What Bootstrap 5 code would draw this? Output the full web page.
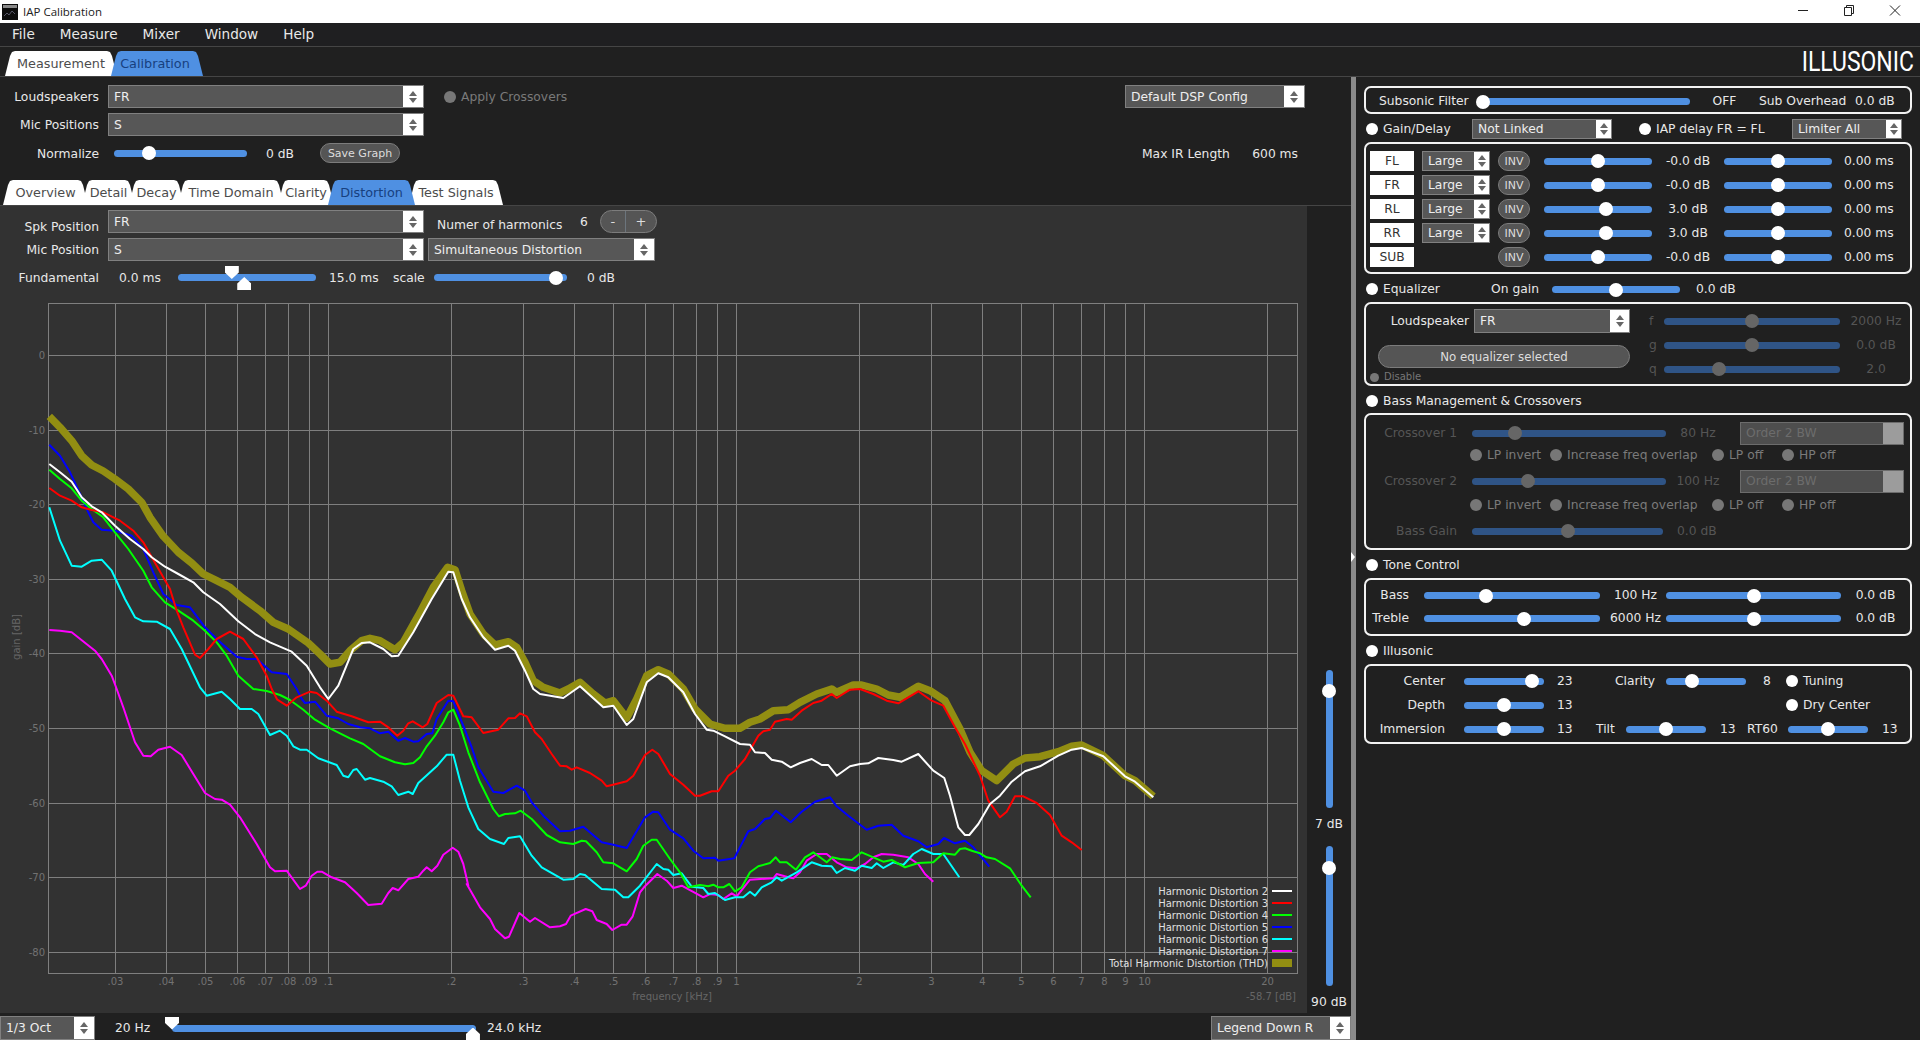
<!DOCTYPE html>
<html lang="en">
<head>
  <meta charset="UTF-8" />
  <title>IAP Calibration</title>
  <link rel="stylesheet" href="https://cdn.jsdelivr.net/npm/bootstrap@5.3.0/dist/css/bootstrap.min.css" />
  <style>
    html, body { height: 100%; }
    body { width: 1920px; height: 1040px; overflow: hidden; background: #202020; color: #e8e8e8; font: 12.3px/1 "DejaVu Sans", sans-serif; }

    /* window chrome */
    .win-title { height: 23px; background: #fff; color: #222; font: 11.5px "Open Sans", sans-serif; }
    .app-ico { width: 16px; height: 16px; margin: 0 5px 0 2px; }
    .win-ctl { width: 46px; height: 23px; }
    .menu-bar { height: 24px; background: #1f1f21; border-bottom: 1px solid #454545; gap: 25px; padding-left: 12px; font-size: 13.6px; }
    .top-row { height: 30px; border-bottom: 1px solid #454545; padding-left: 8px; }
    .logo { position: absolute; right: 6px; top: 1px; font: 400 28px/28px Roboto, sans-serif; color: #fff; transform: scaleX(.82); transform-origin: right center; }

    /* tabs */
    .tb { height: 25px; background: #fff; color: #4c4c4c; display: flex; align-items: center; justify-content: center; margin: 0 -3px; padding-top: 2px; position: relative; font-size: 12.8px;
      clip-path: polygon(0 100%, 5px 5px, 7px 1px, 10px 0, calc(100% - 10px) 0, calc(100% - 7px) 1px, calc(100% - 5px) 5px, 100% 100%); }
    .tb-on { background: #4f90e2; color: #17407f; z-index: 2; }
    .top-tabs { display: grid; grid-template-columns: 106px 86px; }
    .top-tabs .tb-on { padding-right: 4px; }
    .sub-tabs { display: grid; grid-template-columns: 6px 79px 47px 49px 100px 50px 81px 88px; margin-top: 15px; border-bottom: 1px solid #454545; height: 26px; }

    /* form widgets */
    .rw { height: 23px; margin-bottom: 5px; }
    .lb { width: 99px; text-align: right; margin-right: 9px; flex: none; }
    .lb-low { padding-top: 11px !important; }
    .combo { height: 23px; background: #575757; border: 1px solid #808080; color: #eee; display: flex; align-items: center; padding-left: 5px; flex: none; }
    .combo-arr { margin-left: auto; width: 20px; height: 100%; background: #fff; flex: none; display: flex; flex-direction: column; align-items: center; justify-content: center; gap: 2px; }
    .combo-arr::before { content: ""; border: 4px solid transparent; border-top: 0; border-bottom: 5px solid #666; }
    .combo-arr::after { content: ""; border: 4px solid transparent; border-bottom: 0; border-top: 5px solid #666; }
    .combo-sm { height: 20px; }
    .combo-sm .combo-arr { width: 15px; }
    .combo-off { background: #4e4e4e; color: #6c6c6c; border-color: #6c6c6c; }
    .combo-off .combo-arr { background: #9c9c9c; }
    .combo-off .combo-arr::before, .combo-off .combo-arr::after { display: none; }
    .combo-low { padding-top: 2px; }
    .combo-low .combo-arr { margin-top: -2px; height: calc(100% + 2px); }

    .sld { height: 7px; border-radius: 4px; background: #4f90e2; position: relative; flex: none; }
    .sld > span { position: absolute; top: 50%; width: 14px; height: 14px; border-radius: 50%; background: #fff; transform: translate(-50%, -50%); }
    .sld-off { background: #2f5486; }
    .sld-off > span { background: #666; }
    .sld-v { width: 7px; }
    .sld-v > span { left: 50%; }
    .sld > span.tri-d, .sld > span.tri-u { width: 14px; height: 13px; border-radius: 0; transform: translateX(-50%); }
    .sld > span.tri-d { top: -8px; clip-path: polygon(0 0, 100% 0, 100% 50%, 50% 100%, 0 50%); }
    .sld > span.tri-u { top: 3px; clip-path: polygon(50% 0, 100% 50%, 100% 100%, 0 100%, 0 50%); }

    .rad { width: 12px; height: 12px; border-radius: 50%; background: #fff; flex: none; margin-right: 5px; }
    .rad-off { background: #777; }
    .off-txt { color: #7a7a7a; }
    .dim-txt { color: #555; }
    .pill { border: 1px solid #7c7c7c; background: #555; color: #ddd; border-radius: 10px; font-size: 11px; display: flex; align-items: center; justify-content: center; }
    /* dejavu sits a little high in these rows */
    .txt-row > div:not(.sld):not(.combo):not(.pill), .txt-row > .off-txt { padding-top: 2px; }

    /* left pane */
    .pane-l { width: 1351px; flex: none; }
    .upper { padding-top: 8px; }
    .tab-body { height: 807px; }
    .plot-pane { width: 1307px; background: #323232; flex: none; padding-top: 4px; }
    .side { width: 44px; background: #202020; flex: none; padding-bottom: 3px; }
    .side-val { height: 16px; line-height: 16px; margin: 8px 0 0; white-space: nowrap; }
    .bottom-row { height: 27px; }
    #plot { display: block; width: 1307px; height: 723px; }
    #plot text { font-family: "DejaVu Sans", sans-serif; font-size: 10px; }

    /* right pane */
    .splitter { width: 5px; background: #8a8a8a; flex: none; position: relative; }
    .splitter::after { content: ""; position: absolute; left: 0; top: 475px; border: 5px solid transparent; border-left: 4px solid #fff; border-right: 0; }
    .pane-r { padding-left: 8px; width: 564px; }
    .fbox { border: 2px solid #f2f2f2; border-radius: 7px; width: 548px; margin-top: 3px; }
    .sec-r { height: 20px; margin-top: 5px; padding-left: 2px; display: grid; align-items: center; }
    .cell-c { text-align: center; }
    .rgt { text-align: right; }

    .sub-g { display: grid; grid-template-columns: 98px 213px 69px 96px auto; align-items: center; height: 28px; padding-left: 13px; padding-top: 3px; }
    .gain-top { grid-template-columns: 106px 140px 28px 152px 110px; }
    .gain-g { display: grid; grid-template-columns: 44px 68px 32px 114px 56px 108px auto; column-gap: 8px; row-gap: 4px; grid-auto-rows: 20px; align-items: center; height: 132px; padding: 7px 0 0 4px; }
    .ch-btn { height: 20px; background: #fff; color: #333; display: flex; align-items: center; justify-content: center; }
    .ms-slot { padding-left: 4px; }
    .eq-top { grid-template-columns: 125px 61px 128px auto; padding-top: 1px; }
    .eq-box { height: 84px; }
    .eq-left { width: 264px; flex: none; padding-top: 5px; }
    .eq-g { display: grid; grid-template-columns: 15px 176px 72px; grid-auto-rows: 24px; align-items: center; padding: 5px 0 0 19px; }
    .eq-btn { height: 23px; margin: 12px 0 0 12px; border-radius: 12px; font-size: 11.8px; padding-top: 2px; }
    .dis-rw { margin: 4px 0 0 4px; font-size: 10px; color: #777; }
    .dis-rw .rad { width: 9px; height: 9px; margin-right: 5px; }
    .bass-g { display: grid; grid-template-columns: 106px 194px 74px 164px; grid-template-rows: 22px 22px 30px 18px 34px; align-items: center; height: 137px; padding-top: 7px; }
    .lb-pad { text-align: right; padding-right: 15px; }
    .opt-row { grid-column: 1 / 5; display: grid; grid-template-columns: 80px 162px 70px auto; margin-left: 104px; }
    .tone-g { display: grid; grid-template-columns: 58px 176px 66px 175px 1fr; grid-auto-rows: 23px; align-items: center; height: 58px; padding-top: 4px; }
    .ill-box { height: 80px; padding-top: 3px; }
    .ill-a, .ill-c { display: grid; height: 24px; align-items: center; }
    .ill-a { grid-template-columns: 98px 80px 71px 51px 80px 40px auto; }
    .ill-c { grid-template-columns: 98px 80px 52px 30px 80px 41px 41px 80px auto; }
    .pl-13 { padding-left: 13px; }
    .pl-14 { padding-left: 14px; }
    .pl-17 { padding-left: 17px; }
    .pe-19 { padding-right: 19px; }
    .sec-tight { margin-top: 5px; }
  </style>
</head>
<body class="d-flex flex-column">
  <div class="win-title d-flex align-items-center">
    <svg class="app-ico" viewBox="0 0 16 16"><rect width="16" height="16" fill="#0c0c0c"/><rect x="1" y="1" width="14" height="3" fill="#8a8a8a"/><path d="M2 12l3-3 2 2 3-4 3 3" fill="none" stroke="#556" stroke-width="1"/></svg>
    <span>IAP Calibration</span>
    <div class="ms-auto d-flex">
      <svg class="win-ctl" viewBox="0 0 46 23"><path d="M18 10.5h10" stroke="#222"/></svg>
      <svg class="win-ctl" viewBox="0 0 46 23"><path d="M18.5 7.5h7v8h-7zM20.5 7.5v-2h7v8h-2" fill="none" stroke="#222"/></svg>
      <svg class="win-ctl" viewBox="0 0 46 23"><path d="M18 5.5l10 10M28 5.5l-10 10" stroke="#222"/></svg>
      <div style="width:2px"></div>
    </div>
  </div>

  <div class="menu-bar d-flex align-items-center"><span>File</span><span>Measure</span><span>Mixer</span><span>Window</span><span>Help</span></div>

  <div class="top-row d-flex align-items-end position-relative">
    <div class="top-tabs">
      <div class="tb">Measurement</div>
      <div class="tb tb-on">Calibration</div>
    </div>
    <div class="logo">ILLUSONIC</div>
  </div>

  <div class="d-flex flex-grow-1">
    <div class="pane-l d-flex flex-column">
      <div class="upper">
        <div class="rw txt-row d-flex align-items-center">
          <div class="lb">Loudspeakers</div>
          <div class="combo combo-low" style="width:316px">FR<span class="combo-arr"></span></div>
          <span class="rad rad-off" style="margin-left:20px"></span><span class="off-txt">Apply Crossovers</span>
          <div class="combo combo-low" style="width:180px;margin-left:auto;margin-right:46px">Default DSP Config<span class="combo-arr"></span></div>
        </div>
        <div class="rw txt-row d-flex align-items-center">
          <div class="lb">Mic Positions</div>
          <div class="combo combo-low" style="width:316px">S<span class="combo-arr"></span></div>
        </div>
        <div class="txt-row d-flex align-items-center" style="height:24px">
          <div class="lb">Normalize</div>
          <div class="sld" style="width:133px;margin-left:6px"><span style="left:26%"></span></div>
          <div style="width:73px;padding-left:19px">0 dB</div>
          <div class="pill" style="width:80px;height:20px">Save Graph</div>
          <div class="d-flex justify-content-between" style="margin-left:742px;width:156px"><span>Max IR Length</span><span>600 ms</span></div>
        </div>
        <div class="sub-tabs">
          <div></div>
          <div class="tb">Overview</div><div class="tb">Detail</div><div class="tb">Decay</div><div class="tb">Time Domain</div><div class="tb">Clarity</div><div class="tb tb-on">Distortion</div><div class="tb">Test Signals</div>
        </div>
      </div>

      <div class="tab-body d-flex">
        <div class="plot-pane">
          <div class="rw txt-row d-flex align-items-center">
            <div class="lb lb-low">Spk Position</div>
            <div class="combo combo-low" style="width:316px">FR<span class="combo-arr"></span></div>
            <div style="width:143px;margin-left:13px;padding-top:7px">Numer of harmonics</div>
            <div style="width:20px">6</div>
            <div class="pill d-flex" style="width:57px;height:23px;border-radius:12px;font-size:13px"><span class="flex-fill text-center">-</span><span class="flex-fill text-center border-start border-secondary" style="line-height:21px">+</span></div>
          </div>
          <div class="rw txt-row d-flex align-items-center">
            <div class="lb">Mic Position</div>
            <div class="combo combo-low" style="width:316px">S<span class="combo-arr"></span></div>
            <div class="combo combo-low" style="width:227px;margin-left:4px">Simultaneous Distortion<span class="combo-arr"></span></div>
          </div>
          <div class="txt-row d-flex align-items-center" style="height:23px">
            <div class="lb" style="margin-right:20px">Fundamental</div>
            <div style="width:59px">0.0 ms</div>
            <div class="sld" style="width:138px"><span class="tri-d" style="left:39%"></span><span class="tri-u" style="left:48%"></span></div>
            <div style="width:77px;padding-left:13px">15.0 ms</div>
            <div style="width:41px">scale</div>
            <div class="sld" style="width:133px"><span style="left:92%"></span></div>
            <div style="padding-left:20px">0 dB</div>
          </div>
          <svg id="plot" viewBox="0 290 1307 723"></svg>
        </div>
        <div class="side d-flex flex-column align-items-center justify-content-end">
          <div class="sld sld-v" style="height:138px"><span style="top:15%"></span></div>
          <div class="side-val">7 dB</div>
          <div class="sld sld-v" style="height:140px;margin-top:14px"><span style="top:16%"></span></div>
          <div class="side-val">90 dB</div>
        </div>
      </div>

      <div class="bottom-row d-flex align-items-end">
        <div class="combo" style="width:95px;height:24px">1/3 Oct<span class="combo-arr"></span></div>
        <div class="align-self-center text-nowrap" style="width:77px;padding-left:20px;padding-top:3px">20 Hz</div>
        <div class="sld align-self-center" style="width:304px;margin-top:3px"><span class="tri-d" style="left:0"></span><span class="tri-u" style="left:99%"></span></div>
        <div class="align-self-center" style="padding-left:11px;padding-top:3px">24.0 kHz</div>
        <div class="combo ms-auto" style="width:140px;height:24px">Legend Down R<span class="combo-arr"></span></div>
      </div>
    </div>

    <div class="splitter"></div>

    <div class="pane-r">
      <div class="fbox sub-g" style="margin-top:9px">
        <div>Subsonic Filter</div>
        <div class="sld"><span style="left:3%"></span></div>
        <div class="cell-c">OFF</div>
        <div>Sub Overhead</div>
        <div>0.0 dB</div>
      </div>

      <div class="sec-r gain-top">
        <div class="d-flex align-items-center"><span class="rad"></span>Gain/Delay</div>
        <div class="combo combo-sm">Not Linked<span class="combo-arr"></span></div>
        <div></div>
        <div class="d-flex align-items-center" style="margin-left:-1px"><span class="rad"></span>IAP delay FR = FL</div>
        <div class="combo combo-sm">Limiter All<span class="combo-arr"></span></div>
      </div>

      <div class="fbox gain-g">
        <div class="ch-btn">FL</div><div class="combo combo-sm">Large<span class="combo-arr"></span></div><div class="pill h-100">INV</div>
        <div class="sld ms-auto" style="width:108px"><span style="left:50%"></span></div><div class="cell-c">-0.0 dB</div><div class="sld"><span style="left:50%"></span></div><div class="ms-slot">0.00 ms</div>
        <div class="ch-btn">FR</div><div class="combo combo-sm">Large<span class="combo-arr"></span></div><div class="pill h-100">INV</div>
        <div class="sld ms-auto" style="width:108px"><span style="left:50%"></span></div><div class="cell-c">-0.0 dB</div><div class="sld"><span style="left:50%"></span></div><div class="ms-slot">0.00 ms</div>
        <div class="ch-btn">RL</div><div class="combo combo-sm">Large<span class="combo-arr"></span></div><div class="pill h-100">INV</div>
        <div class="sld ms-auto" style="width:108px"><span style="left:57%"></span></div><div class="cell-c">3.0 dB</div><div class="sld"><span style="left:50%"></span></div><div class="ms-slot">0.00 ms</div>
        <div class="ch-btn">RR</div><div class="combo combo-sm">Large<span class="combo-arr"></span></div><div class="pill h-100">INV</div>
        <div class="sld ms-auto" style="width:108px"><span style="left:57%"></span></div><div class="cell-c">3.0 dB</div><div class="sld"><span style="left:50%"></span></div><div class="ms-slot">0.00 ms</div>
        <div class="ch-btn">SUB</div><div></div><div class="pill h-100">INV</div>
        <div class="sld ms-auto" style="width:108px"><span style="left:50%"></span></div><div class="cell-c">-0.0 dB</div><div class="sld"><span style="left:50%"></span></div><div class="ms-slot">0.00 ms</div>
      </div>

      <div class="sec-r eq-top">
        <div class="d-flex align-items-center"><span class="rad"></span>Equalizer</div>
        <div>On gain</div>
        <div class="sld"><span style="left:50%"></span></div>
        <div style="padding-left:16px">0.0 dB</div>
      </div>

      <div class="fbox eq-box d-flex">
        <div class="eq-left">
          <div class="d-flex align-items-center">
            <div class="rgt" style="width:103px;margin-right:5px">Loudspeaker</div>
            <div class="combo" style="width:156px;height:24px">FR<span class="combo-arr" style="width:19px"></span></div>
          </div>
          <div class="pill eq-btn">No equalizer selected</div>
          <div class="dis-rw d-flex align-items-center"><span class="rad rad-off"></span>Disable</div>
        </div>
        <div class="eq-g">
          <div class="dim-txt">f</div><div class="sld sld-off"><span style="left:50%"></span></div><div class="cell-c dim-txt">2000 Hz</div>
          <div class="dim-txt">g</div><div class="sld sld-off"><span style="left:50%"></span></div><div class="cell-c dim-txt">0.0 dB</div>
          <div class="dim-txt">q</div><div class="sld sld-off"><span style="left:31%"></span></div><div class="cell-c dim-txt">2.0</div>
        </div>
      </div>

      <div class="sec-r sec-tight"><div class="d-flex align-items-center"><span class="rad"></span>Bass Management &amp; Crossovers</div></div>

      <div class="fbox bass-g" style="margin-top:2px">
        <div class="lb-pad dim-txt">Crossover 1</div>
        <div class="sld sld-off"><span style="left:22%"></span></div>
        <div class="cell-c dim-txt" style="padding-right:10px">80 Hz</div>
        <div class="combo combo-off">Order 2 BW<span class="combo-arr"></span></div>
        <div class="opt-row off-txt">
          <div class="d-flex align-items-center"><span class="rad rad-off"></span>LP invert</div><div class="d-flex align-items-center"><span class="rad rad-off"></span>Increase freq overlap</div><div class="d-flex align-items-center"><span class="rad rad-off"></span>LP off</div><div class="d-flex align-items-center"><span class="rad rad-off"></span>HP off</div>
        </div>
        <div class="lb-pad dim-txt">Crossover 2</div>
        <div class="sld sld-off"><span style="left:29%"></span></div>
        <div class="cell-c dim-txt" style="padding-right:10px">100 Hz</div>
        <div class="combo combo-off">Order 2 BW<span class="combo-arr"></span></div>
        <div class="opt-row off-txt">
          <div class="d-flex align-items-center"><span class="rad rad-off"></span>LP invert</div><div class="d-flex align-items-center"><span class="rad rad-off"></span>Increase freq overlap</div><div class="d-flex align-items-center"><span class="rad rad-off"></span>LP off</div><div class="d-flex align-items-center"><span class="rad rad-off"></span>HP off</div>
        </div>
        <div class="lb-pad dim-txt">Bass Gain</div>
        <div class="sld sld-off" style="width:191px"><span style="left:50%"></span></div>
        <div class="dim-txt" style="padding-left:11px">0.0 dB</div>
      </div>

      <div class="sec-r sec-tight"><div class="d-flex align-items-center"><span class="rad"></span>Tone Control</div></div>

      <div class="fbox tone-g">
        <div class="lb-pad">Bass</div>
        <div class="sld"><span style="left:35%"></span></div>
        <div class="cell-c" style="padding-left:5px">100 Hz</div>
        <div class="sld"><span style="left:50%"></span></div>
        <div class="cell-c">0.0 dB</div>
        <div class="lb-pad">Treble</div>
        <div class="sld"><span style="left:57%"></span></div>
        <div class="cell-c" style="padding-left:5px">6000 Hz</div>
        <div class="sld"><span style="left:50%"></span></div>
        <div class="cell-c">0.0 dB</div>
      </div>

      <div class="sec-r sec-tight"><div class="d-flex align-items-center"><span class="rad"></span>Illusonic</div></div>

      <div class="fbox ill-box">
        <div class="ill-a">
          <div class="rgt pe-19">Center</div><div class="sld"><span style="left:85%"></span></div><div class="pl-13">23</div>
          <div>Clarity</div><div class="sld"><span style="left:32%"></span></div><div class="pl-17">8</div>
          <div class="d-flex align-items-center"><span class="rad"></span>Tuning</div>
        </div>
        <div class="ill-a">
          <div class="rgt pe-19">Depth</div><div class="sld"><span style="left:50%"></span></div><div class="pl-13">13</div>
          <div></div><div></div><div></div>
          <div class="d-flex align-items-center"><span class="rad"></span>Dry Center</div>
        </div>
        <div class="ill-c">
          <div class="rgt pe-19">Immersion</div><div class="sld"><span style="left:50%"></span></div><div class="pl-13">13</div>
          <div>Tilt</div><div class="sld"><span style="left:50%"></span></div><div class="pl-14">13</div>
          <div>RT60</div><div class="sld"><span style="left:50%"></span></div><div class="pl-14">13</div>
        </div>
      </div>
    </div>
  </div>

  <script>
    const plot = document.getElementById("plot");
    const NS = "http://www.w3.org/2000/svg";

    function add(tag, attrs, txt) {
      const el = document.createElementNS(NS, tag);
      for (const k in attrs) el.setAttribute(k, attrs[k]);
      if (txt) el.textContent = txt;
      plot.appendChild(el);
    }

    // frequency in kHz to pixel column
    const fx = f => Math.round(736 + 408 * Math.log10(f)) + 0.5;

    // grid
    const GRID = "#7f7f7f", LABEL = "#727272";
    add("rect", { x: 48.5, y: 304.5, width: 1249, height: 670, fill: "none", stroke: GRID });
    for (let k = 0; k <= 8; k++) {
      const y = Math.round(356 + 74.6 * k) + 0.5;
      add("path", { d: `M48 ${y}H1297`, stroke: GRID });
      add("text", { x: 45, y: y + 3.5, "text-anchor": "end", fill: LABEL }, k ? "-" + k * 10 : "0");
    }
    const ticks = [[.03,".03"],[.04,".04"],[.05,".05"],[.06,".06"],[.07,".07"],[.08,".08"],[.09,".09"],[.1,".1"],
      [.2,".2"],[.3,".3"],[.4,".4"],[.5,".5"],[.6,".6"],[.7,".7"],[.8,".8"],[.9,".9"],[1,"1"],
      [2,"2"],[3,"3"],[4,"4"],[5,"5"],[6,"6"],[7,"7"],[8,"8"],[9,"9"],[10,"10"],[20,"20"]];
    ticks.forEach(([f, s]) => {
      add("path", { d: `M${fx(f)} 304V974`, stroke: GRID });
      add("text", { x: fx(f), y: 986, "text-anchor": "middle", fill: LABEL }, s);
    });
    add("text", { x: 672, y: 1001, "text-anchor": "middle", fill: "#666" }, "frequency [kHz]");
    add("text", { x: 1296, y: 1001, "text-anchor": "end", fill: "#666" }, "-58.7 [dB]");
    add("text", { x: 0, y: 0, "text-anchor": "middle", fill: "#666", transform: "translate(20 638) rotate(-90)" }, "gain [dB]");

    // traces, digitised per crop: [originX, originY, [x,y,...]] at 3 units per pixel
    const A = [0, 300], B = [400, 520], C = [850, 660], D = [40, 690], E = [440, 860];
    const curves = [
      { col: "#928e12", w: 7.5, segs: [
        [A, [148,352,180,385,215,425,245,470,275,498,310,516,345,540,385,570,425,610,450,655,490,712,535,760,575,792,610,825,650,845,690,865,725,895,780,935,820,970,865,990,925,1032,960,1065,990,1095,1020,1090,1050,1055,1085,1025,1110,1018,1140,1025,1185,1052,1210,1030,1255,950,1300,865]],
        [B, [143,145,165,152,185,215,210,285,250,345,285,378,325,368,350,385,375,430,400,485,430,505,480,522,505,510,540,490,580,525,615,552,640,545,680,597,710,540,740,470,775,452,805,465,850,510,885,570,930,615,975,628,1020,628,1050,610,1080,600,1120,575,1165,572,1200,550,1250,525,1295,510,1310,520,1360,498,1385,498,1430,510,1465,528,1500,535]],
        [C, [205,82,240,95,285,125,330,210,360,280,395,335,440,365,490,315,525,297,570,293,625,278,665,262,695,258,760,290,825,350,855,365,910,412]] ] },
      { col: "#ff00ff", w: 2, segs: [
        [A, [148,993,180,995,215,1000,285,1055,305,1080,335,1130]],
        [D, [230,0,250,55,285,160,310,200,332,202,355,182,390,173,425,198,460,255,495,312,525,330,545,332,570,347,600,385,650,465,690,535,705,547,740,545,780,600,797,590,815,560,832,548,845,548,875,565,915,580,950,612,985,648,1025,644,1045,612,1058,597,1075,604,1105,570,1135,563,1150,545,1160,535,1175,547,1192,530,1210,497,1238,476,1255,488,1270,525,1285,590]],
        [E, [80,75,120,145,150,180,165,210,195,238,207,233,238,162,270,188,285,177,330,205,360,202,378,195,392,170,437,150,457,157,470,183,500,195,517,213,545,197,560,197,578,172,600,100,612,85,652,45,680,65,700,87,725,80,790,115,810,105,835,108,850,120,875,103,890,112,930,62,1000,58,1010,45,1045,55]],
        [B, [1180,1078,1200,1060,1220,1025,1250,1005,1280,1005,1310,1030,1340,1045]],
        [C, [20,628,45,615,70,595,95,585,130,587,175,595,205,615,225,645,250,668]] ] },
      { col: "#00ffff", w: 2, segs: [
        [A, [148,625,180,725,215,800,245,803,275,785,305,782,335,815,375,900,405,955,430,967,470,968,510,990,545,1050,600,1165]],
        [D, [500,20,545,8,570,30,600,60,635,60,655,75,690,138,720,125,740,140,760,172,780,182,800,182,835,208,890,228,910,260,925,265,940,243,950,240,975,272,990,267,1030,278,1055,292,1075,318,1105,308,1118,315,1135,282,1190,232,1220,197,1240,197]],
        [B, [180,785,205,865,235,930,270,960,312,975,325,957,360,952,395,1010,425,1045,490,1082,520,1080,540,1065,555,1068,605,1110,645,1112,670,1135,685,1135,720,1100,770,1035,790,1050,805,1052,820,1068,845,1063,875,1103,910,1107,925,1125,945,1122,975,1143,1005,1135,1030,1135,1050,1118,1065,1130,1085,1105,1115,1090,1130,1075,1145,1085,1190,1060,1235,1030,1265,1040,1295,1042,1310,1062,1335,1047,1365,1055]],
        [C, [35,620,65,627,80,613,100,627,130,610,160,618,190,585,215,570,250,585,280,585,328,655]] ] },
      { col: "#0000ff", w: 2, segs: [
        [A, [148,437,180,470,210,520,245,595,265,640,280,670,305,692,345,695,395,710,430,750,460,820,490,885,530,918,570,925,615,985,650,1020,710,1073,740,1080,770,1080,815,1120,860,1125,890,1170,905,1200]],
        [D, [795,42,825,38,860,80,895,88,925,105,960,115,990,118,1020,133,1045,128,1075,155,1095,147,1120,158,1135,157,1160,135,1177,133,1190,90,1225,35,1240,37]],
        [B, [190,620,215,685,235,745,280,818,310,822,350,800,375,815,395,850,430,890,480,937,510,935,550,923,605,970,640,977,680,987,735,895,760,878,775,880,810,932,850,958,880,995,910,1018,945,1016,955,1025,1003,1018,1045,937,1065,930,1095,900,1110,897,1128,875,1172,910,1205,878,1245,848,1290,835,1310,862,1345,890]],
        [C, [50,512,85,500,125,497,160,530,205,547,230,565,265,555,282,537,315,553,345,545,370,565,418,623]] ] },
      { col: "#00ff00", w: 2, segs: [
        [A, [148,512,180,540,215,568,245,605,275,630,310,655,345,700,385,750,430,815,455,865,495,910,535,935,580,965,615,995,650,1030,680,1070,715,1130,760,1170]],
        [D, [680,6,720,18,750,33,790,62,825,92,870,118,930,148,970,165,1020,202,1065,220,1095,226,1120,222,1140,205,1160,172,1185,140,1210,100,1225,70,1240,62]],
        [B, [180,620,205,700,240,790,280,870,297,892,315,885,345,883,362,875,395,900,440,948,480,970,520,975,545,965,558,967,590,1000,610,1030,640,1033,680,1057,710,1020,730,980,755,962,770,962,810,1020,840,1060,865,1105,900,1098,925,1102,940,1097,955,1105,970,1105,988,1095,1005,1117,1025,1105,1050,1060,1075,1042,1110,1032,1127,1015,1140,1030,1160,1030,1188,1052,1215,1015,1240,1000,1280,1030,1297,1015,1320,1020,1355,1023]],
        [C, [35,580,70,595,100,608,125,603,165,625,205,612,250,610,280,583,315,587,330,570,345,568,365,575,390,583,410,595,435,600,480,628,515,680,542,715]] ] },
      { col: "#ff0000", w: 2, segs: [
        [A, [148,567,180,590,215,605,245,625,275,633,310,640,360,665,400,695,430,730,470,800,510,870,530,935,550,985,585,1067,600,1077,625,1050,650,1020,690,998,730,1020,770,1075,800,1130]],
        [D, [695,0,712,32,740,50,770,25,810,8,830,12,860,35,890,68,935,82,985,100,1020,98,1045,115,1072,140,1090,125,1105,103,1118,97,1148,115,1162,105,1190,42,1225,18,1240,20,1270,82,1295,85]],
        [B, [215,595,250,642,295,632,325,598,345,597,360,583,380,592,405,640,425,660,455,705,480,740,500,742,515,752,530,745,570,762,605,785,620,802,645,796,680,787,700,770,735,708,757,692,775,705,810,765,850,797,885,830,900,830,935,817,955,817,985,770,1005,755,1035,720,1075,650,1090,637,1110,632,1125,608,1160,600,1175,602,1205,575,1240,552,1265,545,1295,525,1310,537,1350,512]],
        [C, [30,90,70,105,110,125,145,133,205,97,245,125,280,140,315,205,345,255,390,350,415,425,450,475,470,458,495,412,520,412,560,432,600,468,635,530,665,550,695,573]] ] },
      { col: "#ffffff", w: 2, segs: [
        [A, [148,495,180,520,215,548,245,595,275,622,305,640,345,680,390,720,430,750,455,775,495,803,535,825,580,850,610,880,660,915,715,967,765,1005,810,1030,875,1058,920,1100,960,1165,985,1200,1015,1160,1060,1050,1085,1032,1110,1030,1150,1050,1175,1072,1195,1070,1240,1000,1295,900,1345,818,1360,820]],
        [B, [185,240,210,295,250,355,285,392,325,380,345,395,375,455,400,510,420,525,490,537,540,502,610,565,640,560,680,618,700,600,740,490,775,463,805,475,850,520,885,585,920,632,940,635,975,652,1020,675,1050,677,1065,700,1095,702,1115,722,1145,728,1172,745,1200,732,1235,720,1265,738,1285,738,1310,770,1350,742]],
        [C, [30,315,55,313,85,297,130,303,155,308,205,285,250,335,283,357,300,410,325,505,345,528,358,528,385,495,420,435,450,410,485,368,525,337,570,322,625,290,665,272,695,267,760,292,825,352,855,368,910,415]] ] }
    ];
    curves.forEach(c => {
      const pts = [];
      c.segs.forEach(([o, a]) => {
        for (let i = 0; i < a.length; i += 2) pts.push((o[0] + a[i] / 3).toFixed(1) + "," + (o[1] + a[i + 1] / 3).toFixed(1));
      });
      add("polyline", { points: pts.join(" "), fill: "none", stroke: c.col, "stroke-width": c.w, "stroke-linejoin": "round" });
    });

    // legend
    const legend = [["Harmonic Distortion 2","#fff"],["Harmonic Distortion 3","#f00"],["Harmonic Distortion 4","#0f0"],["Harmonic Distortion 5","#00f"],["Harmonic Distortion 6","#0ff"],["Harmonic Distortion 7","#f0f"],["Total Harmonic Distortion (THD)","#928e12"]];
    legend.forEach(([s, col], i) => {
      const y = 892 + 12 * i;
      add("text", { x: 1268, y: y + 3.5, "text-anchor": "end", fill: "#e0e0e0" }, s);
      add("rect", { x: 1272, y: i == 6 ? y - 4 : y - 1, width: 20, height: i == 6 ? 8 : 2, fill: col });
    });
  </script>
</body>
</html>
